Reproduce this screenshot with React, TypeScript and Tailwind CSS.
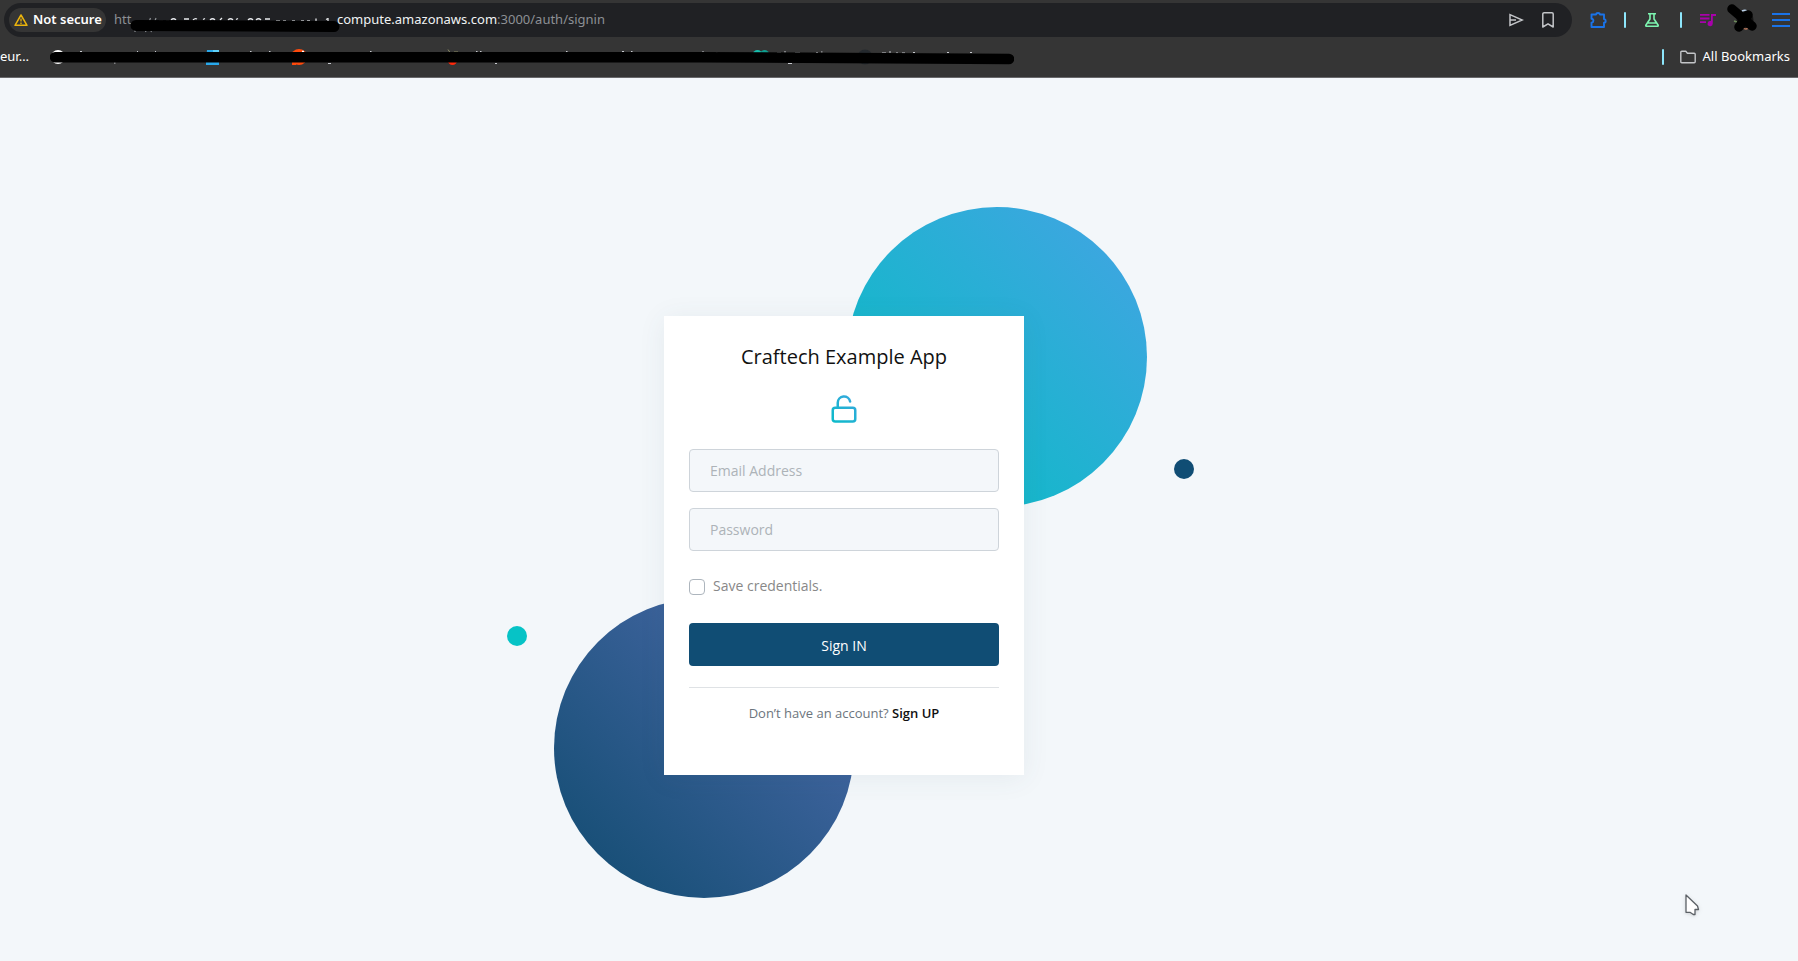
import type { ReactNode } from 'react';

function Divider() {
  return <span className="h-4 w-0.5 rounded-full bg-[#8de6fb]" />;
}

function IconButton({ label, className, children }: { label: string; className?: string; children: ReactNode }) {
  return (
    <button type="button" aria-label={label} className={`flex shrink-0 items-center justify-center ${className ?? ''}`}>
      {children}
    </button>
  );
}

function WarningIcon() {
  return (
    <svg width="14" height="12" viewBox="0 0 14 12" fill="none" aria-hidden="true">
      <path d="M7 1 13 11.3H1Z" stroke="#eab30c" strokeWidth="1.5" strokeLinejoin="round" />
      <path d="M7 4.4v3.2M7 8.6v1.3" stroke="#eab30c" strokeWidth="1.3" />
    </svg>
  );
}

function MaskedHost() {
  return (
    <svg width="205" height="34" viewBox="0 0 205 34" className="shrink-0 overflow-visible" aria-hidden="true">
      <g stroke="#8d9094" strokeWidth="1.2" fill="none">
        <path d="M3 27v2M18.5 15 13.5 29M24 15l-5 14" />
        <path d="M27 18h4M34 18h3" />
      </g>
      <g stroke="#e8eaed" strokeWidth="1.3" fill="none">
        <path d="M39 17q2.500-2.500 5 0M52 16h5M61 17q2-2 4-1M71 16.500l2-1M78 17q2.500-2.500 5 0M88 17l2-2M96 17q2.500-2.500 5 0M104 16.500l2-1M116 17q2.500-2.500 5 0M124 17q2.500-2.500 5 0M133 16h5M144 18h4M151 18h3M160 18h3M169 18h3M175 18h3M184 15.500v3M194 16.500l2-1M196 15v10" />
      </g>
      <path d="M4 22.500 202 23.500" stroke="#000" strokeWidth="11" strokeLinecap="round" />
    </svg>
  );
}

function MaskedBookmarks() {
  return (
    <svg width="964" height="20" viewBox="50 47 964 20" className="shrink-0" aria-hidden="true">
      <circle cx="58" cy="57" r="7" fill="#fff" />
      <path d="M207 50h12v15h-13v-5z" fill="#29a8ea" />
      <path d="M213 50h6v2h-6z" fill="#5fd0f7" />
      <circle cx="299" cy="57" r="8" fill="#ff4a0c" />
      <path d="M292 61h4v4h-4z" fill="#ff4a0c" />
      <path d="M302 51.500h2" stroke="#fff" strokeWidth="1.500" />
      <path d="M448 61h9a4.500 4 0 0 1-9 0" fill="#ff2a0c" />
      <path d="M448 49.500l2 3M454 52h4" stroke="#8a8a62" strokeWidth="1" />
      <circle cx="757.500" cy="54.500" r="4.500" fill="#17bfae" />
      <circle cx="764.500" cy="54.500" r="4.500" fill="#0f9f90" />
      <circle cx="865" cy="57" r="7.500" fill="#24292e" />
      <g stroke="#c9cbd0" strokeWidth="1">
        <path d="M80 51.500h2M137 51.500h1M155 51.500h1M250 51.500h1.500M269 51.500h1.500M370 51.500h1.500M476 51.500h1.500M480 51.500h1.500M566 51.500h1.500M622 51.500h2M631 51.500h1.500M662 52.500h3M670 52.500h4M680 52.500h2M686 52.500h2M702 52h2M716 52.500h1.500M777 53h4M784 52h2M795 53h5M816 52.500h2M821 52h1.500M882 53h4M889 52h2M896 53h2M902 53h3M913 52.500h2M947 52.500h2M970 52.500h2" />
        <path d="M114 63h1.500M328 63.500h3M495 63.500h2M788 63.500h4" />
      </g>
      <path d="M55 57.200H700L1009 59" fill="none" stroke="#000" strokeWidth="10.500" strokeLinecap="round" />
    </svg>
  );
}

function BrowserBar() {
  return (
    <header className="flex h-[78px] shrink-0 flex-col overflow-hidden border-b border-[#68686b] bg-[#353535] pt-[3px] font-['Noto_Sans',sans-serif] text-[13px] text-white">
      <div className="flex items-center pl-1 pr-2">
        <div className="flex h-[34px] flex-1 items-center overflow-hidden rounded-full bg-[#202124] pl-[5px] pr-3.5">
          <button type="button" className="flex h-6 w-[97px] shrink-0 items-center gap-[5px] rounded-full bg-[#353535] pl-[5px] font-semibold">
            <WarningIcon />
            <span className="whitespace-nowrap">Not secure</span>
          </button>
          <div className="ml-2 flex items-center whitespace-nowrap text-[#8d9094]">
            <span className="w-[18px]">htt</span>
            <MaskedHost />
            <span className="text-[#f1f3f4]">compute.amazonaws.com</span>
            <span>:3000/auth/signin</span>
          </div>
          <IconButton label="Share this page" className="ml-auto size-5">
            <svg width="16" height="16" viewBox="0 0 16 16" fill="none" stroke="#c3c5c8" strokeWidth="1.500">
              <path d="M2 2.600 14.300 8 2 13.400V2.600ZM2.500 8H8" />
            </svg>
          </IconButton>
          <IconButton label="Bookmark this page" className="ml-3 size-5">
            <svg width="14" height="18" viewBox="0 0 14 18" fill="none" stroke="#c3c5c8" strokeWidth="1.500" strokeLinejoin="round">
              <path d="M1.800 3a1.300 1.300 0 0 1 1.300-1.300h7.800A1.300 1.300 0 0 1 12.200 3v13L7 12.800 1.800 16Z" />
            </svg>
          </IconButton>
        </div>
        <div className="flex items-center pl-4">
          <IconButton label="Extensions" className="mr-4 size-5">
            <svg width="18" height="18" viewBox="0 0 18 18" fill="none" stroke="#1a73e8" strokeWidth="1.900" strokeLinejoin="round">
              <path d="M2.500 3.500H7Q7.200 2 9 2t2 1.500h4V8q1.700.2 1.700 1.900T15 11.700V16H2.500v-4.200q1.900-.3 1.900-2T2.500 7.800Z" />
            </svg>
          </IconButton>
          <Divider />
          <IconButton label="Labs" className="ml-4 mr-[18px] size-5">
            <svg width="16" height="16" viewBox="0 0 16 16" fill="none" stroke="#7df5b0" strokeWidth="1.600" strokeLinejoin="round">
              <path d="M4 1.800h8M6 2v5L1.800 13.200Q1.600 14.200 2.600 14.200h10.800q1 0 .8-1L10 7V2M4 11h8" />
            </svg>
          </IconButton>
          <Divider />
          <IconButton label="Media controls" className="ml-4 mr-2 size-5">
            <svg width="16" height="16" viewBox="0 0 16 16" fill="#a900ab">
              <path d="M0 2h9.500v1.800H0zM0 5.600h9.500v1.800H0zM0 9.200h6v1.800H0zM11 2h5v2h-3.200v7.600a2.600 2.600 0 1 1-1.800-2.500z" />
            </svg>
          </IconButton>
          <IconButton label="Profile" className="h-[34px] w-8">
            <svg width="32" height="34" viewBox="1726 3 32 34" fill="none">
              <circle cx="1745" cy="20" r="8.500" fill="#151515" />
              <path d="M1742 11q3-1.500 5 0" stroke="#b9d0e8" strokeWidth="1.500" />
              <path d="M1743 28q3 2 5 0" stroke="#b5745a" strokeWidth="1.500" />
              <path d="M1734 21l3 1" stroke="#6d8a5c" strokeWidth="1.500" />
              <path d="M1732 9 1752 26M1748 15 1739 27" stroke="#000" strokeWidth="9.500" strokeLinecap="round" />
            </svg>
          </IconButton>
          <IconButton label="Menu" className="ml-3.5 h-5 w-[18px]">
            <svg width="18" height="16" viewBox="0 0 18 16" stroke="#1a73e8" strokeWidth="2">
              <path d="M0 2h18M0 8h18M0 14h18" />
            </svg>
          </IconButton>
        </div>
      </div>
      <div className="flex flex-1 items-center whitespace-nowrap pr-2">
        <span className="w-[50px] shrink-0">eur…</span>
        <MaskedBookmarks />
        <div className="ml-auto flex items-center gap-4">
          <Divider />
          <button type="button" className="flex items-center gap-1.5">
            <svg width="16" height="14" viewBox="0 0 16 14" fill="none" stroke="#c3c5c8" strokeWidth="1.400" strokeLinejoin="round" aria-hidden="true">
              <path d="M.8 2.300Q.8 1.300 1.800 1.300h4l1.600 1.900h6.800q1 0 1 1v7.500q0 1-1 1H1.800q-1 0-1-1Z" />
            </svg>
            All Bookmarks
          </button>
        </div>
      </div>
    </header>
  );
}

function UnlockIcon() {
  return (
    <svg width="30" height="30" viewBox="0 0 24 24" fill="none" stroke="url(#lock-fill)" strokeWidth="2" strokeLinecap="round" strokeLinejoin="round" aria-hidden="true">
      <defs>
        <linearGradient id="lock-fill" gradientUnits="userSpaceOnUse" x1="22" y1="0" x2="2" y2="22">
          <stop offset="0" stopColor="#3ba6e0" />
          <stop offset="1" stopColor="#0bbbc9" />
        </linearGradient>
      </defs>
      <rect x="3" y="11" width="18" height="11" rx="2" />
      <path d="M7 11V7a5 5 0 0 1 9.900-1" />
    </svg>
  );
}

const fieldClass =
  'h-[43px] w-full rounded border border-[#ced4da] bg-[#f4f7fa] px-5 text-sm text-[#495057] outline-none placeholder:text-[#adb3b8] focus:border-[#104d74]';

function SignInCard() {
  return (
    <form
      onSubmit={(event) => event.preventDefault()}
      className="relative flex flex-col items-center bg-white px-[25px] pb-[52px] pt-[25px] shadow-[0_3px_26px_rgba(69,90,100,0.08)]"
    >
      <h1 className="text-xl leading-8 text-[#111]">Craftech Example App</h1>
      <div className="mb-[25px] mt-[21px]">
        <UnlockIcon />
      </div>
      <div className="flex w-full flex-col gap-4">
        <input type="email" aria-label="Email Address" placeholder="Email Address" className={fieldClass} />
        <input type="password" aria-label="Password" placeholder="Password" className={fieldClass} />
      </div>
      <div className="mt-[25px] flex w-full gap-2">
        <input id="save" type="checkbox" className="mt-[3px] size-4 appearance-none rounded border border-[#adb5bd] bg-white checked:bg-[#104d74]" />
        <label htmlFor="save" className="text-sm leading-5 text-[#888]">
          Save credentials.
        </label>
      </div>
      <button type="submit" className="mt-[27px] h-[43px] w-full rounded bg-[#104d74] pt-0.5 text-sm text-white">
        Sign IN
      </button>
      <hr className="mt-[21px] w-full border-[#dfe2e5]" />
      <p className="mt-[15px] text-[13px] leading-5 text-[#6c757d]">
        Don’t have an account?{' '}
        <a href="#signup" className="font-semibold text-[#111]">
          Sign UP
        </a>
      </p>
    </form>
  );
}

export default function App() {
  return (
    <div className="flex min-h-screen flex-col overflow-hidden font-['Open_Sans',sans-serif]">
      <BrowserBar />
      <main className="relative flex flex-1 items-center justify-center bg-[#f3f7fa] pr-[110px] pt-[52px]">
        <div className="relative w-[360px]">
          <span className="absolute -top-[109px] left-[183px] size-[300px] rounded-full bg-[linear-gradient(-135deg,#44a3e4_0%,#03bfc1_100%)]" />
          <span className="absolute left-[510px] top-[143px] size-5 rounded-full bg-[#104d74]" />
          <span className="absolute -left-[157px] top-[310px] size-5 rounded-full bg-[#06c3c6]" />
          <span className="absolute -left-[110px] top-[282px] size-[300px] rounded-full bg-[linear-gradient(-135deg,#4f6cae_0%,#104b6f_100%)]" />
          <SignInCard />
        </div>
        <svg width="18" height="26" viewBox="0 0 18 26" className="absolute bottom-[42px] right-[96px] drop-shadow" aria-hidden="true">
          <path d="M2 2v17.300h4l3.300 2.200H11v-5h3.500L13.500 13Z" fill="#fff" stroke="#5c6166" strokeWidth="1.300" strokeLinejoin="round" />
        </svg>
      </main>
    </div>
  );
}
